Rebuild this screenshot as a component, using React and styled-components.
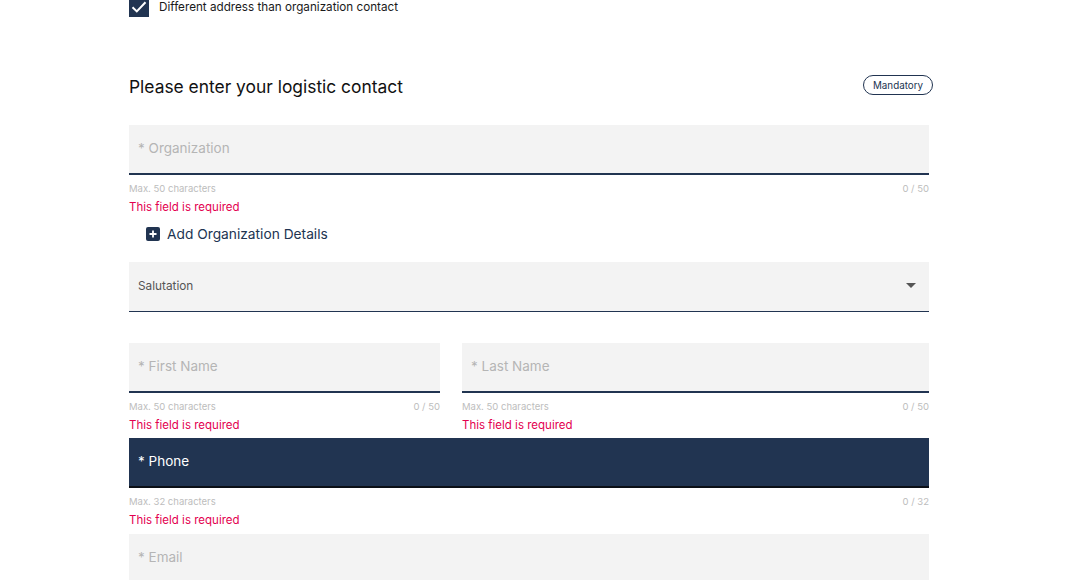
import React from "react";
import styled, { createGlobalStyle } from "styled-components";

const Global = createGlobalStyle`
  html, body { margin: 0; padding: 0; background: #fff; }
  body { font-family: Inter, "Noto Sans", "Liberation Sans", sans-serif; overflow: hidden; }
  * { box-sizing: border-box; }
`;

const NAVY = "#213451";

const Page = styled.div`
  width: 1075px;
  height: 580px;
  overflow: hidden;
  padding-left: 129px;
`;

const Form = styled.div`
  width: 800px;
  margin-top: -3px;
  display: flex;
  flex-direction: column;
`;

const CheckRow = styled.label`
  display: flex;
  align-items: center;
  gap: 10px;
  height: 20px;
  font-size: 11.7px;
  color: #1a1a1a;
`;

const CheckBox = styled.span`
  width: 20px;
  height: 20px;
  background: ${NAVY};
  display: flex;
  align-items: center;
  justify-content: center;
`;

const Header = styled.div`
  width: 804px;
  margin-top: 58px;
  display: flex;
  align-items: center;
  justify-content: space-between;
  height: 24px;
`;

const Title = styled.h2`
  margin: 0;
  font-size: 17.4px;
  font-weight: 400;
  color: #111;
  line-height: 24px;
`;

const Badge = styled.span`
  height: 20px;
  padding: 0 9px;
  border: 1px solid ${NAVY};
  border-radius: 10px;
  font-size: 9.8px;
  color: ${NAVY};
  display: flex;
  align-items: center;
  margin-top: -4px;
`;

const Field = styled.div`
  height: 50px;
  margin-top: ${(p) => p.$mt || 0}px;
  background: ${(p) => (p.$active ? NAVY : "#f3f3f3")};
  border-bottom: ${(p) => p.$bw || 2}px solid ${(p) => (p.$active ? "#0b0f16" : NAVY)};
  padding: 0 9px 2px;
  display: flex;
  align-items: center;
  justify-content: space-between;
  font-size: ${(p) => (p.$small ? 11.8 : 13.5)}px;
  color: ${(p) => (p.$active ? "#fff" : p.$small ? "#555" : "#b5b5b5")};
`;

const Helper = styled.div`
  margin-top: 7px;
  display: flex;
  justify-content: space-between;
  font-size: 9.5px;
  line-height: 14px;
  color: #bdbdbd;
`;

const Error = styled.div`
  margin-top: 3px;
  font-size: 11.5px;
  line-height: 16px;
  color: #e3004f;
`;

const AddRow = styled.div`
  margin-top: 9px;
  padding-left: 17px;
  height: 20px;
  display: flex;
  align-items: center;
  gap: 7px;
  font-size: 13.75px;
  color: ${NAVY};
`;

const PlusIcon = styled.span`
  width: 14px;
  height: 14px;
  border-radius: 2px;
  background: ${NAVY};
  display: flex;
  align-items: center;
  justify-content: center;
`;

const Row = styled.div`
  margin-top: ${(p) => p.$mt || 0}px;
  display: grid;
  grid-template-columns: 311px 467px;
  column-gap: 22px;
`;

const Col = styled.div`
  display: flex;
  flex-direction: column;
`;

const Arrow = styled.span`
  width: 0;
  height: 0;
  border-left: 5px solid transparent;
  border-right: 5px solid transparent;
  border-top: 5px solid #555;
  margin-right: 4px;
`;

function TextField({ label, max, mt, active }) {
  return (
    <Col>
      <Field $mt={mt} $active={active}>
        {label}
      </Field>
      <Helper>
        <span>Max. {max} characters</span>
        <span>0 / {max}</span>
      </Helper>
      <Error>This field is required</Error>
    </Col>
  );
}

export default function App() {
  return (
    <Page>
      <Global />
      <Form>
        <CheckRow>
          <CheckBox>
            <svg width="16" height="14" viewBox="0 0 16 14">
              <path d="M1.5 7.2 L5.8 11.4 L14.5 2.2" fill="none" stroke="#fff" strokeWidth="2" />
            </svg>
          </CheckBox>
          Different address than organization contact
        </CheckRow>

        <Header>
          <Title>Please enter your logistic contact</Title>
          <Badge>Mandatory</Badge>
        </Header>

        <TextField label="* Organization" max={50} mt={26} />

        <AddRow>
          <PlusIcon>
            <svg width="8" height="8" viewBox="0 0 8 8">
              <path d="M4 0.5 V7.5 M0.5 4 H7.5" stroke="#fff" strokeWidth="1.8" />
            </svg>
          </PlusIcon>
          Add Organization Details
        </AddRow>

        <Field $mt={18} $small $bw={1}>
          Salutation
          <Arrow />
        </Field>

        <Row $mt={31}>
          <TextField label="* First Name" max={50} />
          <TextField label="* Last Name" max={50} />
        </Row>

        <Col>
          <Field $mt={5} $active>
            * Phone
          </Field>
          <Helper>
            <span>Max. 32 characters</span>
            <span>0 / 32</span>
          </Helper>
          <Error>This field is required</Error>
        </Col>

        <Field $mt={6}>* Email</Field>
      </Form>
    </Page>
  );
}
